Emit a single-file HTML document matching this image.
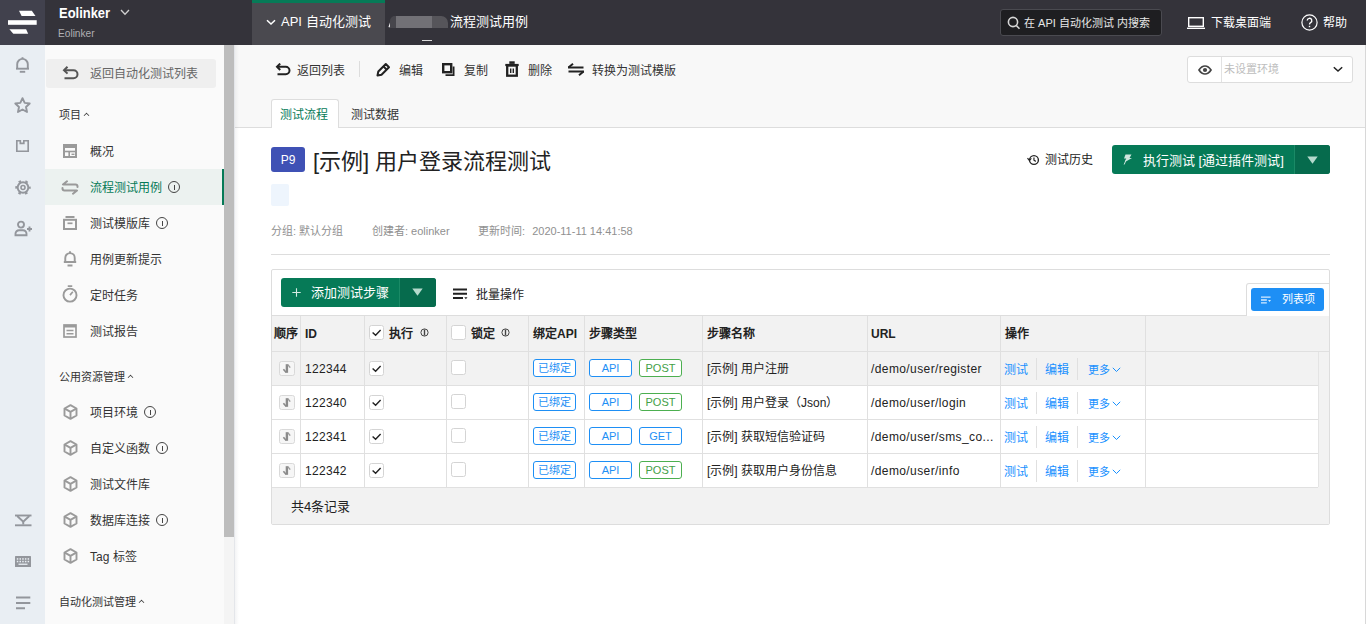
<!DOCTYPE html>
<html lang="zh-CN">
<head>
<meta charset="utf-8">
<title>Eolinker</title>
<style>
*{box-sizing:border-box;margin:0;padding:0}
html,body{width:1366px;height:624px;overflow:hidden;background:#fff}
body{font-family:"Liberation Sans",sans-serif;font-size:12px;color:#333;position:relative}
.abs{position:absolute}
svg{display:block}
/* ---------- header ---------- */
#hdr{position:absolute;left:0;top:0;width:1366px;height:45px;background:#34333a}
#logo{position:absolute;left:0;top:0;width:45px;height:45px;background:#41414d}
#brand{position:absolute;left:59px;top:5px;color:#fff;font-weight:bold;font-size:14px;line-height:16px;transform:scaleX(.925);transform-origin:0 0}
#brand2{position:absolute;left:58px;top:26px;color:#b0b0b4;font-size:11px;line-height:14px;transform:scaleX(.92);transform-origin:0 0}
#navtab{position:absolute;left:252px;top:0;width:133px;height:45px;background:#4a494f;border-top:3px solid #067a57}
#navtab span{position:absolute;left:29px;top:11px;color:#fff;font-size:13px;line-height:16px;white-space:nowrap}
#crumb{position:absolute;left:450px;top:14px;color:#fff;font-size:13px;line-height:16px;white-space:nowrap}
#blur{position:absolute;left:390px;top:16px;width:58px;height:12px;background:linear-gradient(90deg,#47464c 0,#47464c 6px,#727176 6px,#727176 42px,#56555a 42px,#56555a 100%);border-radius:5px 7px 0 0}
#search{position:absolute;left:1000px;top:9px;width:162px;height:27px;background:#1e1e21;border:1px solid #4a4a50;border-radius:3px}
#search span{position:absolute;left:23px;top:6px;color:#e6e6e6;font-size:11px;line-height:14px;white-space:nowrap}
.hl{position:absolute;top:15px;color:#fff;font-size:12px;line-height:16px;white-space:nowrap}
/* ---------- rail ---------- */
#rail{position:absolute;left:0;top:45px;width:45px;height:579px;background:#e9eef3}
/* ---------- sidebar ---------- */
#side{position:absolute;left:45px;top:45px;width:179px;height:579px;background:#fafafa}
#sbar{position:absolute;left:224px;top:45px;width:11px;height:579px;background:#f4f4f4;border-right:1px solid #e4e6ea}
#sthumb{position:absolute;left:224px;top:45px;width:10px;height:492px;background:#bdbdbd}
#back{position:absolute;left:46px;top:59px;width:170px;height:29px;background:#efefef;border-radius:3px}
.sl{position:absolute;left:90px;font-size:12px;line-height:16px;color:#333;white-space:nowrap}
.sh{position:absolute;left:59px;font-size:11px;line-height:14px;color:#333;white-space:nowrap}
#act{position:absolute;left:45px;top:169px;width:179px;height:36px;background:#ecf2f0;border-right:2px solid #067a57}
.car{display:inline-block;width:5px;height:5px;margin-left:3px;position:relative;top:-1px;border-left:1.500px solid #333;border-top:1.500px solid #333;transform:rotate(45deg) scale(.8)}
.inf{display:inline-block;width:12px;height:12px;border:1px solid #444;border-radius:50%;margin-left:6px;position:relative;top:1px}
.inf:after{content:"";position:absolute;left:4.500px;top:2.500px;width:1px;height:5px;background:#444}
/* ---------- main ---------- */
.th{top:326px;font-size:12px;line-height:16px;font-weight:bold;color:#222;white-space:nowrap}
.td{font-size:12px;line-height:16px;color:#222;white-space:nowrap}
.lk{color:#1890ff}
.tag{height:18px;border-radius:3px;font-size:11px;line-height:16px;text-align:center;background:#fff;white-space:nowrap}
.tag.b{border:1px solid #1e8ff5;color:#1e8ff5}
.tag.g{border:1px solid #4caf50;color:#43a047}

.meta{top:224px;font-size:11px;line-height:14px;color:#909090;white-space:nowrap}
#tool{position:absolute;left:235px;top:45px;width:1131px;height:83px;background:#f8f8f8;border-bottom:1px solid #ddd}
#main{position:absolute;left:235px;top:128px;width:1131px;height:496px;background:#fff}
#redge{position:absolute;left:1365px;top:45px;width:1px;height:579px;background:#d8d8d8}
.tb{position:absolute;top:63px;font-size:12px;line-height:16px;color:#333;white-space:nowrap}
</style>
</head>
<body>
<div id="hdr">
  <div id="logo"><svg width="45" height="45" viewBox="0 0 45 45"><path d="M19 10.800h12.800l3.700 5.200H21.600z" fill="#fff"/><rect x="8" y="20.200" width="28.700" height="4.600" fill="#fff"/><path d="M9.400 29.200h16.700l2.100 4.600H13.300z" fill="#fff"/></svg></div>
  <div id="brand">Eolinker</div>
  <div id="brand2">Eolinker</div>
  <svg class="abs" style="left:120px;top:9px" width="10" height="7" viewBox="0 0 10 7" fill="none" stroke="#d0d0d0" stroke-width="1.300"><path d="M1 1l4 4.300L9 1"/></svg>
  <div id="navtab"><svg class="abs" style="left:14px;top:16px" width="10" height="7" viewBox="0 0 10 7" fill="none" stroke="#fff" stroke-width="1.500"><path d="M1 1.200l4 3.800 4-3.800"/></svg><span>API 自动化测试</span></div>
  <svg class="abs" style="left:388px;top:21px" width="4" height="7" viewBox="0 0 4 7"><path d="M3 0.500L1 6.200" stroke="#f0f0f0" stroke-width="1.200" fill="none"/></svg>
  <div id="blur"></div>
  <div class="abs" style="left:422px;top:40px;width:10px;height:1px;background:#dcdcdc"></div>
  <div id="crumb">流程测试用例</div>
  <div id="search"><svg class="abs" style="left:6px;top:6px" width="14" height="14" viewBox="0 0 14 14" fill="none" stroke="#d6d6d6" stroke-width="1.600"><circle cx="6" cy="6" r="4.600"/><path d="M9.300 9.500l3.200 3.300"/></svg><span>在 API 自动化测试 内搜索</span></div>
  <svg class="abs" style="left:1187px;top:17px" width="18" height="12" viewBox="0 0 18 12" fill="none" stroke="#fff" stroke-width="1.400"><rect x="1.700" y="0.700" width="14.600" height="8.600"/><path d="M0 11.300h18"/></svg>
  <svg class="abs" style="left:1301px;top:14px" width="17" height="17" viewBox="0 0 17 17" fill="none" stroke="#fff" stroke-width="1.200"><circle cx="8.500" cy="8.500" r="7.600"/><path d="M6.200 6.600a2.300 2.300 0 1 1 3.400 2c-.8.500-1.100.9-1.100 1.800" stroke-width="1.300"/><path d="M8.500 11.800v1.400" stroke-width="1.400"/></svg>
  <div class="hl" style="left:1211px">下载桌面端</div>
  <div class="hl" style="left:1323px">帮助</div>
</div>
<div id="rail">
  <!-- bell -->
  <svg class="abs" style="left:13px;top:11px" width="19" height="19" viewBox="0 0 19 19" fill="none" stroke="#93969c" stroke-width="1.9"><path d="M4.2 12.5V8.2a5.3 5.3 0 0 1 10.6 0v4.3"/><path d="M3 12.7h13"/><path d="M9.5 1.2v1.8"/><path d="M6.8 15.8h5.4"/></svg>
  <!-- star -->
  <svg class="abs" style="left:13px;top:51px" width="19" height="19" viewBox="0 0 19 19" fill="none" stroke="#93969c" stroke-width="1.9" stroke-linejoin="round"><path d="M9.5 2.2l2.2 4.7 5 .6-3.7 3.5 1 5-4.5-2.5L5 16l1-5L2.3 7.5l5-.6z"/></svg>
  <!-- flag -->
  <svg class="abs" style="left:15px;top:94px" width="15" height="14" viewBox="0 0 17 16" fill="none" stroke="#93969c" stroke-width="1.9"><path d="M2 2h4v3h4V2h5v12H2z"/></svg>
  <!-- gear -->
  <svg class="abs" style="left:15px;top:134px" width="16" height="17" viewBox="0 0 16 17" fill="none" stroke="#93969c"><circle cx="8" cy="8.500" r="5.300" stroke-width="1.900"/><circle cx="8" cy="8.500" r="6.700" stroke-width="2" stroke-dasharray="2.600 4.420" stroke-dashoffset="1.300"/><circle cx="8" cy="8.500" r="2" stroke-width="1.600"/></svg>
  <!-- user plus -->
  <svg class="abs" style="left:14px;top:175px" width="19" height="17" viewBox="0 0 19 17" fill="none" stroke="#93969c" stroke-width="1.9"><circle cx="7" cy="4.6" r="3"/><path d="M1.5 15.2v-1.4a3.6 3.6 0 0 1 3.6-3.6h3.8a3.6 3.6 0 0 1 3.6 3.6v1.4z"/><path d="M15.5 6.5v5M13 9h5"/></svg>
  <!-- download-ish -->
  <svg class="abs" style="left:15px;top:469px" width="17" height="13" viewBox="0 0 17 13" fill="none" stroke="#93969c" stroke-width="1.900"><path d="M0 1.500h16.500"/><path d="M2.200 2l6.050 5.800L14.300 2"/><path d="M8.250 7.500v3"/><path d="M0 11.300h16.500"/></svg>
  <!-- keyboard -->
  <svg class="abs" style="left:15px;top:511px" width="16" height="11" viewBox="0 0 16 11"><rect x="0" y="0" width="16" height="11" rx="0.500" fill="#93969c"/><g fill="#e9eef3"><rect x="1.800" y="2.200" width="1.500" height="1.500"/><rect x="4.500" y="2.200" width="1.500" height="1.500"/><rect x="7.200" y="2.200" width="1.500" height="1.500"/><rect x="9.900" y="2.200" width="1.500" height="1.500"/><rect x="12.600" y="2.200" width="1.500" height="1.500"/><rect x="1.800" y="4.800" width="1.500" height="1.500"/><rect x="4.500" y="4.800" width="1.500" height="1.500"/><rect x="7.200" y="4.800" width="1.500" height="1.500"/><rect x="9.900" y="4.800" width="1.500" height="1.500"/><rect x="12.600" y="4.800" width="1.500" height="1.500"/><rect x="3.500" y="7.600" width="9" height="1.300"/></g></svg>
  <!-- lines -->
  <svg class="abs" style="left:16px;top:551px" width="15" height="14" viewBox="0 0 15 14" fill="none" stroke="#93969c" stroke-width="2"><path d="M0 1.500h14.300M0 7h14.300M0 12.200h9"/></svg>
</div>
<div id="side"></div>
<div id="sbar"></div><div id="sthumb"></div>
<div id="back"></div>
<div id="act"></div>
<svg class="abs" style="left:62px;top:66px" width="17" height="14" viewBox="0 0 17 14" fill="none" stroke="#555" stroke-width="2"><path d="M2 4.200h9.500a4 4 0 0 1 0 8H2.500"/><path d="M5.500 0.800L2 4.200l3.500 3.400"/></svg>
<div class="sl" style="top:66px;color:#666">返回自动化测试列表</div>
<div class="sh" style="top:108px">项目<span class="car"></span></div>
<svg class="abs" style="left:63px;top:144px" width="14" height="14" viewBox="0 0 14 14" fill="none" stroke="#9a9a9a"><rect x="1" y="1" width="12" height="12" stroke-width="2"/><path d="M1 2.500h12" stroke-width="3"/><path d="M1 7.500h12" stroke-width="1.600"/><path d="M6.200 7.500v5.500" stroke-width="1.600"/><path d="M8.500 10.300h3" stroke-width="1.400"/></svg>
<div class="sl" style="top:144px">概况</div>
<svg class="abs" style="left:61px;top:180px" width="18" height="15" viewBox="0 0 18 15" fill="none" stroke="#9a9a9a" stroke-width="2" stroke-linejoin="round" stroke-linecap="round"><path d="M6 1.300L2 4.500h12.500a2 2 0 0 1 2 2V7"/><path d="M12 13.700l4-3.200H3.500a2 2 0 0 1-2-2V8"/></svg>
<div class="sl" style="top:180px;color:#067a57">流程测试用例<i class="inf"></i></div>
<svg class="abs" style="left:63px;top:216px" width="14" height="14" viewBox="0 0 14 14" fill="none" stroke="#9a9a9a"><path d="M2.500 1h9" stroke-width="2"/><rect x="1" y="3.800" width="12" height="9.200" stroke-width="2"/><path d="M4.500 7.300h5" stroke-width="1.700"/></svg>
<div class="sl" style="top:216px">测试模版库<i class="inf"></i></div>
<svg class="abs" style="left:62px;top:250px" width="16" height="18" viewBox="0 0 14 16" fill="none" stroke="#9a9a9a" stroke-width="1.700"><path d="M2.800 10.500V7a4.200 4.200 0 0 1 8.400 0v3.500"/><path d="M1.500 10.700h11M7 1v1.600M4.800 13.800h4.400"/></svg>
<div class="sl" style="top:252px">用例更新提示</div>
<svg class="abs" style="left:62px;top:285px" width="16" height="18" viewBox="0 0 14 16" fill="none" stroke="#9a9a9a" stroke-width="1.700"><circle cx="7" cy="9" r="5.800"/><path d="M7 9l2.500-3M5 1h4" stroke-width="1.500"/></svg>
<div class="sl" style="top:288px">定时任务</div>
<svg class="abs" style="left:63px;top:324px" width="14" height="14" viewBox="0 0 14 14" fill="none" stroke="#9a9a9a" stroke-width="1.700"><rect x="1" y="1" width="12" height="12"/><path d="M1 2.200h12" stroke-width="2.600"/><path d="M3.500 6.500h7M3.500 9.800h7" stroke-width="1.500"/></svg>
<div class="sl" style="top:324px">测试报告</div>
<div class="sh" style="top:370px">公用资源管理<span class="car"></span></div>
<svg class="abs" style="left:63px;top:404px" width="15" height="16" viewBox="0 0 15 16" fill="none" stroke="#9a9a9a" stroke-width="1.900" stroke-linejoin="round"><path d="M7.5 1.2l6 3.3v7l-6 3.3-6-3.3v-7z"/><path d="M1.8 4.7l5.7 3.2 5.7-3.2M7.5 8v6.5"/></svg>
<div class="sl" style="top:405px">项目环境<i class="inf"></i></div>
<svg class="abs" style="left:63px;top:440px" width="15" height="16" viewBox="0 0 15 16" fill="none" stroke="#9a9a9a" stroke-width="1.900" stroke-linejoin="round"><path d="M7.5 1.2l6 3.3v7l-6 3.3-6-3.3v-7z"/><path d="M1.8 4.7l5.7 3.2 5.7-3.2M7.5 8v6.5"/></svg>
<div class="sl" style="top:441px">自定义函数<i class="inf"></i></div>
<svg class="abs" style="left:63px;top:476px" width="15" height="16" viewBox="0 0 15 16" fill="none" stroke="#9a9a9a" stroke-width="1.900" stroke-linejoin="round"><path d="M7.5 1.2l6 3.3v7l-6 3.3-6-3.3v-7z"/><path d="M1.8 4.7l5.7 3.2 5.7-3.2M7.5 8v6.5"/></svg>
<div class="sl" style="top:477px">测试文件库</div>
<svg class="abs" style="left:63px;top:512px" width="15" height="16" viewBox="0 0 15 16" fill="none" stroke="#9a9a9a" stroke-width="1.900" stroke-linejoin="round"><path d="M7.5 1.2l6 3.3v7l-6 3.3-6-3.3v-7z"/><path d="M1.8 4.7l5.7 3.2 5.7-3.2M7.5 8v6.5"/></svg>
<div class="sl" style="top:513px">数据库连接<i class="inf"></i></div>
<svg class="abs" style="left:63px;top:548px" width="15" height="16" viewBox="0 0 15 16" fill="none" stroke="#9a9a9a" stroke-width="1.900" stroke-linejoin="round"><path d="M7.5 1.2l6 3.3v7l-6 3.3-6-3.3v-7z"/><path d="M1.8 4.7l5.7 3.2 5.7-3.2M7.5 8v6.5"/></svg>
<div class="sl" style="top:549px">Tag 标签</div>
<div class="sh" style="top:595px">自动化测试管理<span class="car"></span></div>
<div id="tool"></div>
<!-- toolbar -->
<svg class="abs" style="left:275px;top:63px" width="16" height="13" viewBox="0 0 16 13" fill="none" stroke="#222" stroke-width="2"><path d="M2 3.800h8.800a3.700 3.700 0 0 1 0 7.400H2.500"/><path d="M5.200 0.600L2 3.800l3.200 3.200"/></svg>
<div class="tb" style="left:297px">返回列表</div>
<div class="abs" style="left:359px;top:61px;width:1px;height:16px;background:#ddd"></div>
<svg class="abs" style="left:376px;top:62px" width="15" height="15" viewBox="0 0 15 15" fill="none" stroke="#222" stroke-width="2" stroke-linejoin="round"><path d="M1.500 13.500l.8-4L9.800 2l3.200 3.200-7.500 7.500z"/><path d="M7.300 4.300l3.300 3.300"/></svg>
<div class="tb" style="left:399px">编辑</div>
<svg class="abs" style="left:441px;top:62px" width="15" height="15" viewBox="0 0 15 15"><rect x="2.200" y="2.200" width="8" height="8" fill="none" stroke="#222" stroke-width="2.400"/><path d="M12.600 4.500v8.600H4.500" fill="none" stroke="#222" stroke-width="1.800"/></svg>
<div class="tb" style="left:464px">复制</div>
<svg class="abs" style="left:505px;top:61px" width="14" height="16" viewBox="0 0 14 16" fill="none" stroke="#222"><path d="M0.300 4h13.400" stroke-width="2.200"/><path d="M4.300 1.600h5.400" stroke-width="2.600"/><rect x="2.200" y="4.500" width="9.600" height="10.200" stroke-width="2.300"/><path d="M5.700 7.500v4.500M8.300 7.500v4.500" stroke-width="1.400"/></svg>
<div class="tb" style="left:528px">删除</div>
<svg class="abs" style="left:567px;top:63px" width="18" height="13" viewBox="0 0 18 13" fill="none" stroke="#222" stroke-width="2" stroke-linejoin="round"><path d="M1 4.500h15.500"/><path d="M6 0.800L1.500 4.500"/><path d="M17 8.500H1.500"/><path d="M12 12.200l4.500-3.700"/></svg>
<div class="tb" style="left:592px">转换为测试模版</div>
<!-- env select -->
<div class="abs" style="left:1187px;top:56px;width:166px;height:27px;background:#fff;border:1px solid #ddd;border-radius:3px"></div>
<div class="abs" style="left:1221px;top:57px;width:1px;height:25px;background:#e2e2e2"></div>
<svg class="abs" style="left:1198px;top:65px" width="14" height="10" viewBox="0 0 14 10" fill="none" stroke="#444" stroke-width="1.700"><path d="M1 5C2.800 2.200 4.700 1 7 1s4.200 1.200 6 4C11.200 7.800 9.300 9 7 9S2.800 7.800 1 5z"/><circle cx="7" cy="5" r="2.100" fill="#444" stroke="none"/></svg>
<div class="abs" style="left:1224px;top:62px;font-size:11px;line-height:14px;color:#bdbdbd;white-space:nowrap">未设置环境</div>
<svg class="abs" style="left:1333px;top:66px" width="10" height="7" viewBox="0 0 10 7" fill="none" stroke="#222" stroke-width="1.500"><path d="M0.800 1.200l4.200 3.900 4.200-3.900"/></svg>
<!-- tabs -->
<div class="abs" style="left:271px;top:99px;width:68px;height:30px;background:#fff;border:1px solid #ddd;border-bottom:none;border-radius:3px 3px 0 0"></div>
<div class="abs" style="left:280px;top:107px;font-size:12px;line-height:16px;color:#067a57;white-space:nowrap">测试流程</div>
<div class="abs" style="left:351px;top:107px;font-size:12px;line-height:16px;color:#333;white-space:nowrap">测试数据</div>
<div id="main"></div>
<!-- title -->
<div class="abs" style="left:271px;top:147px;width:34px;height:25px;background:#3f51b5;border-radius:3px;color:#fff;font-size:12px;line-height:27px;text-align:center">P9</div>
<div class="abs" style="left:313px;top:148px;font-size:22px;line-height:28px;color:#222;white-space:nowrap">[示例] 用户登录流程测试</div>
<div class="abs" style="left:271px;top:184px;width:18px;height:22px;background:#eef5fd;border-radius:2px"></div>
<div class="abs meta" style="left:271px">分组: 默认分组</div>
<div class="abs meta" style="left:372px">创建者: eolinker</div>
<div class="abs meta" style="left:478px">更新时间:&nbsp;&nbsp;<span style="margin-left:1px">2020-11-11 14:41:58</span></div>
<div class="abs" style="left:271px;top:254px;width:1059px;height:1px;background:#ddd"></div>
<!-- right buttons -->
<svg class="abs" style="left:1027px;top:154px" width="13" height="12" viewBox="0 0 14 13" fill="none" stroke="#222" stroke-width="1.500"><circle cx="7.500" cy="6.500" r="4.800"/><path d="M7.500 3.800v3l2 1.200" stroke-width="1.300"/><path d="M0.500 4.500l2 2.500 2.200-2.200" stroke-width="1.300"/></svg>
<div class="abs" style="left:1045px;top:152px;font-size:12px;line-height:16px;color:#222;white-space:nowrap">测试历史</div>
<div class="abs" style="left:1112px;top:145px;width:218px;height:29px;background:#067a57;border-radius:3px"></div>
<div class="abs" style="left:1294px;top:145px;width:36px;height:29px;background:#066b4d;border-radius:0 3px 3px 0;border-left:1px solid #1a8a66"></div>
<svg class="abs" style="left:1123px;top:154px" width="10" height="11" viewBox="0 0 10 11" fill="#cfe6de"><path d="M2.500 0.500h6L6.500 4h2.500L2 8l1.200-3.500H1z"/><path d="M3.200 5.500L1.200 10.500" stroke="#cfe6de" stroke-width="1"/></svg>
<div class="abs" style="left:1143px;top:152px;font-size:13px;line-height:17px;color:#fff;white-space:nowrap">执行测试 [通过插件测试]</div>
<svg class="abs" style="left:1307px;top:156px" width="11" height="8" viewBox="0 0 11 8"><path d="M0.300 0.500h10.400L5.500 7.700z" fill="#b5dacd"/></svg>
<!-- table card -->
<div class="abs" style="left:271px;top:269px;width:1059px;height:256px;border:1px solid #ddd;border-radius:2px;background:#fff"></div>
<div class="abs" style="left:281px;top:278px;width:155px;height:29px;background:#067a57;border-radius:3px"></div>
<div class="abs" style="left:399px;top:278px;width:37px;height:29px;background:#066b4d;border-radius:0 3px 3px 0;border-left:1px solid #1a8a66"></div>
<svg class="abs" style="left:292px;top:288px" width="9" height="9" viewBox="0 0 9 9" stroke="#d5ebe3" stroke-width="1.100"><path d="M4.500 0.300v8.400M0.300 4.500h8.400"/></svg>
<div class="abs" style="left:311px;top:284px;font-size:13px;line-height:17px;color:#fff;white-space:nowrap">添加测试步骤</div>
<svg class="abs" style="left:412px;top:288px" width="11" height="8" viewBox="0 0 11 8"><path d="M0.300 0.500h10.400L5.500 7.700z" fill="#b5dacd"/></svg>
<svg class="abs" style="left:453px;top:288px" width="15" height="12" viewBox="0 0 15 12" fill="none" stroke="#222" stroke-width="2"><path d="M0 1.500h14M0 5.800h14M0 10h10"/><path d="M11.300 9.200h3.200l-1.600 2z" fill="#222" stroke="none"/></svg>
<div class="abs" style="left:476px;top:287px;font-size:12px;line-height:16px;color:#222;white-space:nowrap">批量操作</div>
<div class="abs" style="left:272px;top:315px;width:1057px;height:209px;background:#f2f2f2;border-top:1px solid #ddd"></div>
<div class="abs" style="left:1246px;top:283px;width:84px;height:33px;background:#fff;border:1px solid #ddd;border-bottom:none;border-radius:3px 0 0 0"></div>
<div class="abs" style="left:1251px;top:288px;width:73px;height:23px;background:#1e8ff5;border-radius:3px"></div>
<svg class="abs" style="left:1261px;top:296px" width="10" height="8" viewBox="0 0 12 9" fill="none" stroke="#d6ebff" stroke-width="1.600"><path d="M0 1h11.500M0 4.500h7M0 8h7"/><path d="M8.500 4.500h3.500l-1.750 2.500z" fill="#d6ebff" stroke="none"/></svg>
<div class="abs" style="left:1282px;top:292px;font-size:11px;line-height:14px;color:#fff;white-space:nowrap">列表项</div>
<div class="abs" style="left:272px;top:351px;width:1046px;height:35px;background:#f2f2f2;border-top:1px solid #e0e0e0;border-bottom:1px solid #e0e0e0"></div>
<div class="abs" style="left:272px;top:385px;width:1046px;height:35px;background:#fff;border-top:1px solid #e0e0e0;border-bottom:1px solid #e0e0e0"></div>
<div class="abs" style="left:272px;top:419px;width:1046px;height:35px;background:#fff;border-top:1px solid #e0e0e0;border-bottom:1px solid #e0e0e0"></div>
<div class="abs" style="left:272px;top:453px;width:1046px;height:35px;background:#fff;border-top:1px solid #e0e0e0;border-bottom:1px solid #e0e0e0"></div>
<div class="abs" style="left:300px;top:316px;width:1px;height:171px;background:#e0e0e0"></div>
<div class="abs" style="left:364px;top:316px;width:1px;height:171px;background:#e0e0e0"></div>
<div class="abs" style="left:446px;top:316px;width:1px;height:171px;background:#e0e0e0"></div>
<div class="abs" style="left:528px;top:316px;width:1px;height:171px;background:#e0e0e0"></div>
<div class="abs" style="left:584px;top:316px;width:1px;height:171px;background:#e0e0e0"></div>
<div class="abs" style="left:702px;top:316px;width:1px;height:171px;background:#e0e0e0"></div>
<div class="abs" style="left:867px;top:316px;width:1px;height:171px;background:#e0e0e0"></div>
<div class="abs" style="left:1000px;top:316px;width:1px;height:171px;background:#e0e0e0"></div>
<div class="abs" style="left:1145px;top:316px;width:1px;height:171px;background:#e0e0e0"></div>
<div class="abs th" style="left:274px">顺序</div>
<div class="abs th" style="left:305px">ID</div>
<div class="abs th" style="left:389px">执行</div>
<div class="abs th" style="left:471px">锁定</div>
<div class="abs th" style="left:533px">绑定API</div>
<div class="abs th" style="left:589px">步骤类型</div>
<div class="abs th" style="left:707px">步骤名称</div>
<div class="abs th" style="left:871px">URL</div>
<div class="abs th" style="left:1005px">操作</div>
<svg class="abs" style="left:369px;top:325px" width="15" height="15" viewBox="0 0 15 15"><rect x="0.500" y="0.500" width="14" height="14" rx="2" fill="#fff" stroke="#d4d4d4"/><path d="M3.600 7.500l3 2.800 5-5.400" fill="none" stroke="#222" stroke-width="1.400"/></svg>
<svg class="abs" style="left:451px;top:325px" width="15" height="15" viewBox="0 0 15 15"><rect x="0.500" y="0.500" width="14" height="14" rx="2" fill="#fff" stroke="#d4d4d4"/></svg>
<svg class="abs" style="left:420px;top:328px" width="9" height="9" viewBox="0 0 9 9" fill="none" stroke="#444" stroke-width="1"><circle cx="4.500" cy="4.500" r="3.600"/><path d="M4.500 1.500v6" stroke-width="1.400"/></svg>
<svg class="abs" style="left:501px;top:328px" width="9" height="9" viewBox="0 0 9 9" fill="none" stroke="#444" stroke-width="1"><circle cx="4.500" cy="4.500" r="3.600"/><path d="M4.500 1.500v6" stroke-width="1.400"/></svg>
<svg class="abs" style="left:279px;top:361px" width="16" height="15" viewBox="0 0 16 15"><rect x="0.500" y="0.500" width="15" height="14" rx="2" fill="#f6f6f6" stroke="#d9d9d9"/><path d="M7.900 3.200V11.800" fill="none" stroke="#8a8a8a" stroke-width="2.400"/><path d="M7.200 11.600L4.400 8.300" fill="none" stroke="#8a8a8a" stroke-width="1.600"/><path d="M8.600 3.400l2.600 3.200" fill="none" stroke="#9a9a9a" stroke-width="1.400"/></svg>
<div class="abs td" style="left:305px;top:361px;letter-spacing:.3px">122344</div>
<svg class="abs" style="left:369px;top:361px" width="15" height="15" viewBox="0 0 15 15"><rect x="0.500" y="0.500" width="14" height="14" rx="2" fill="#fff" stroke="#d4d4d4"/><path d="M3.600 7.500l3 2.800 5-5.400" fill="none" stroke="#222" stroke-width="1.400"/></svg>
<svg class="abs" style="left:451px;top:360px" width="15" height="15" viewBox="0 0 15 15"><rect x="0.500" y="0.500" width="14" height="14" rx="2" fill="#fff" stroke="#d4d4d4"/></svg>
<div class="abs tag b" style="left:533px;top:359px;width:43px">已绑定</div>
<div class="abs tag b" style="left:589px;top:359px;width:43px">API</div>
<div class="abs tag g" style="left:639px;top:359px;width:43px">POST</div>
<div class="abs td" style="left:707px;top:361px">[示例] 用户注册</div>
<div class="abs td" style="left:871px;top:361px;letter-spacing:.4px">/demo/user/register</div>
<div class="abs td lk" style="left:1004px;top:362px">测试</div>
<div class="abs" style="left:1036px;top:358px;width:1px;height:22px;background:#e0e0e0"></div>
<div class="abs td lk" style="left:1045px;top:362px">编辑</div>
<div class="abs" style="left:1077px;top:358px;width:1px;height:22px;background:#e0e0e0"></div>
<div class="abs td lk" style="left:1088px;top:362px;font-size:11px">更多</div>
<svg class="abs" style="left:1112px;top:367px" width="9" height="6" viewBox="0 0 9 6" fill="none" stroke="#1890ff" stroke-width="1"><path d="M0.800 0.800l3.700 3.700 3.700-3.700"/></svg>
<svg class="abs" style="left:279px;top:395px" width="16" height="15" viewBox="0 0 16 15"><rect x="0.500" y="0.500" width="15" height="14" rx="2" fill="#f6f6f6" stroke="#d9d9d9"/><path d="M7.900 3.200V11.800" fill="none" stroke="#8a8a8a" stroke-width="2.400"/><path d="M7.200 11.600L4.400 8.300" fill="none" stroke="#8a8a8a" stroke-width="1.600"/><path d="M8.600 3.400l2.600 3.200" fill="none" stroke="#9a9a9a" stroke-width="1.400"/></svg>
<div class="abs td" style="left:305px;top:395px;letter-spacing:.3px">122340</div>
<svg class="abs" style="left:369px;top:395px" width="15" height="15" viewBox="0 0 15 15"><rect x="0.500" y="0.500" width="14" height="14" rx="2" fill="#fff" stroke="#d4d4d4"/><path d="M3.600 7.500l3 2.800 5-5.400" fill="none" stroke="#222" stroke-width="1.400"/></svg>
<svg class="abs" style="left:451px;top:394px" width="15" height="15" viewBox="0 0 15 15"><rect x="0.500" y="0.500" width="14" height="14" rx="2" fill="#fff" stroke="#d4d4d4"/></svg>
<div class="abs tag b" style="left:533px;top:393px;width:43px">已绑定</div>
<div class="abs tag b" style="left:589px;top:393px;width:43px">API</div>
<div class="abs tag g" style="left:639px;top:393px;width:43px">POST</div>
<div class="abs td" style="left:707px;top:395px">[示例] 用户登录（Json）</div>
<div class="abs td" style="left:871px;top:395px;letter-spacing:.4px">/demo/user/login</div>
<div class="abs td lk" style="left:1004px;top:396px">测试</div>
<div class="abs" style="left:1036px;top:392px;width:1px;height:22px;background:#e0e0e0"></div>
<div class="abs td lk" style="left:1045px;top:396px">编辑</div>
<div class="abs" style="left:1077px;top:392px;width:1px;height:22px;background:#e0e0e0"></div>
<div class="abs td lk" style="left:1088px;top:396px;font-size:11px">更多</div>
<svg class="abs" style="left:1112px;top:401px" width="9" height="6" viewBox="0 0 9 6" fill="none" stroke="#1890ff" stroke-width="1"><path d="M0.800 0.800l3.700 3.700 3.700-3.700"/></svg>
<svg class="abs" style="left:279px;top:429px" width="16" height="15" viewBox="0 0 16 15"><rect x="0.500" y="0.500" width="15" height="14" rx="2" fill="#f6f6f6" stroke="#d9d9d9"/><path d="M7.900 3.200V11.800" fill="none" stroke="#8a8a8a" stroke-width="2.400"/><path d="M7.200 11.600L4.400 8.300" fill="none" stroke="#8a8a8a" stroke-width="1.600"/><path d="M8.600 3.400l2.600 3.200" fill="none" stroke="#9a9a9a" stroke-width="1.400"/></svg>
<div class="abs td" style="left:305px;top:429px;letter-spacing:.3px">122341</div>
<svg class="abs" style="left:369px;top:429px" width="15" height="15" viewBox="0 0 15 15"><rect x="0.500" y="0.500" width="14" height="14" rx="2" fill="#fff" stroke="#d4d4d4"/><path d="M3.600 7.500l3 2.800 5-5.400" fill="none" stroke="#222" stroke-width="1.400"/></svg>
<svg class="abs" style="left:451px;top:428px" width="15" height="15" viewBox="0 0 15 15"><rect x="0.500" y="0.500" width="14" height="14" rx="2" fill="#fff" stroke="#d4d4d4"/></svg>
<div class="abs tag b" style="left:533px;top:427px;width:43px">已绑定</div>
<div class="abs tag b" style="left:589px;top:427px;width:43px">API</div>
<div class="abs tag b" style="left:639px;top:427px;width:43px">GET</div>
<div class="abs td" style="left:707px;top:429px">[示例] 获取短信验证码</div>
<div class="abs td" style="left:871px;top:429px;letter-spacing:.4px">/demo/user/sms_co...</div>
<div class="abs td lk" style="left:1004px;top:430px">测试</div>
<div class="abs" style="left:1036px;top:426px;width:1px;height:22px;background:#e0e0e0"></div>
<div class="abs td lk" style="left:1045px;top:430px">编辑</div>
<div class="abs" style="left:1077px;top:426px;width:1px;height:22px;background:#e0e0e0"></div>
<div class="abs td lk" style="left:1088px;top:430px;font-size:11px">更多</div>
<svg class="abs" style="left:1112px;top:435px" width="9" height="6" viewBox="0 0 9 6" fill="none" stroke="#1890ff" stroke-width="1"><path d="M0.800 0.800l3.700 3.700 3.700-3.700"/></svg>
<svg class="abs" style="left:279px;top:463px" width="16" height="15" viewBox="0 0 16 15"><rect x="0.500" y="0.500" width="15" height="14" rx="2" fill="#f6f6f6" stroke="#d9d9d9"/><path d="M7.900 3.200V11.800" fill="none" stroke="#8a8a8a" stroke-width="2.400"/><path d="M7.200 11.600L4.400 8.300" fill="none" stroke="#8a8a8a" stroke-width="1.600"/><path d="M8.600 3.400l2.600 3.200" fill="none" stroke="#9a9a9a" stroke-width="1.400"/></svg>
<div class="abs td" style="left:305px;top:463px;letter-spacing:.3px">122342</div>
<svg class="abs" style="left:369px;top:463px" width="15" height="15" viewBox="0 0 15 15"><rect x="0.500" y="0.500" width="14" height="14" rx="2" fill="#fff" stroke="#d4d4d4"/><path d="M3.600 7.500l3 2.800 5-5.400" fill="none" stroke="#222" stroke-width="1.400"/></svg>
<svg class="abs" style="left:451px;top:462px" width="15" height="15" viewBox="0 0 15 15"><rect x="0.500" y="0.500" width="14" height="14" rx="2" fill="#fff" stroke="#d4d4d4"/></svg>
<div class="abs tag b" style="left:533px;top:461px;width:43px">已绑定</div>
<div class="abs tag b" style="left:589px;top:461px;width:43px">API</div>
<div class="abs tag g" style="left:639px;top:461px;width:43px">POST</div>
<div class="abs td" style="left:707px;top:463px">[示例] 获取用户身份信息</div>
<div class="abs td" style="left:871px;top:463px;letter-spacing:.4px">/demo/user/info</div>
<div class="abs td lk" style="left:1004px;top:464px">测试</div>
<div class="abs" style="left:1036px;top:460px;width:1px;height:22px;background:#e0e0e0"></div>
<div class="abs td lk" style="left:1045px;top:464px">编辑</div>
<div class="abs" style="left:1077px;top:460px;width:1px;height:22px;background:#e0e0e0"></div>
<div class="abs td lk" style="left:1088px;top:464px;font-size:11px">更多</div>
<svg class="abs" style="left:1112px;top:469px" width="9" height="6" viewBox="0 0 9 6" fill="none" stroke="#1890ff" stroke-width="1"><path d="M0.800 0.800l3.700 3.700 3.700-3.700"/></svg>
<div class="abs" style="left:272px;top:351px;width:1057px;height:1px;background:#e0e0e0"></div>
<div class="abs" style="left:1318px;top:352px;width:1px;height:135px;background:#e4e4e4"></div>
<div class="abs" style="left:291px;top:498px;font-size:13px;line-height:17px;color:#222;white-space:nowrap">共4条记录</div>
<div class="abs" style="left:235px;top:45px;width:4px;height:579px;background:linear-gradient(90deg,rgba(60,70,90,.06),rgba(60,70,90,0))"></div>
<div id="redge"></div>
</body>
</html>
